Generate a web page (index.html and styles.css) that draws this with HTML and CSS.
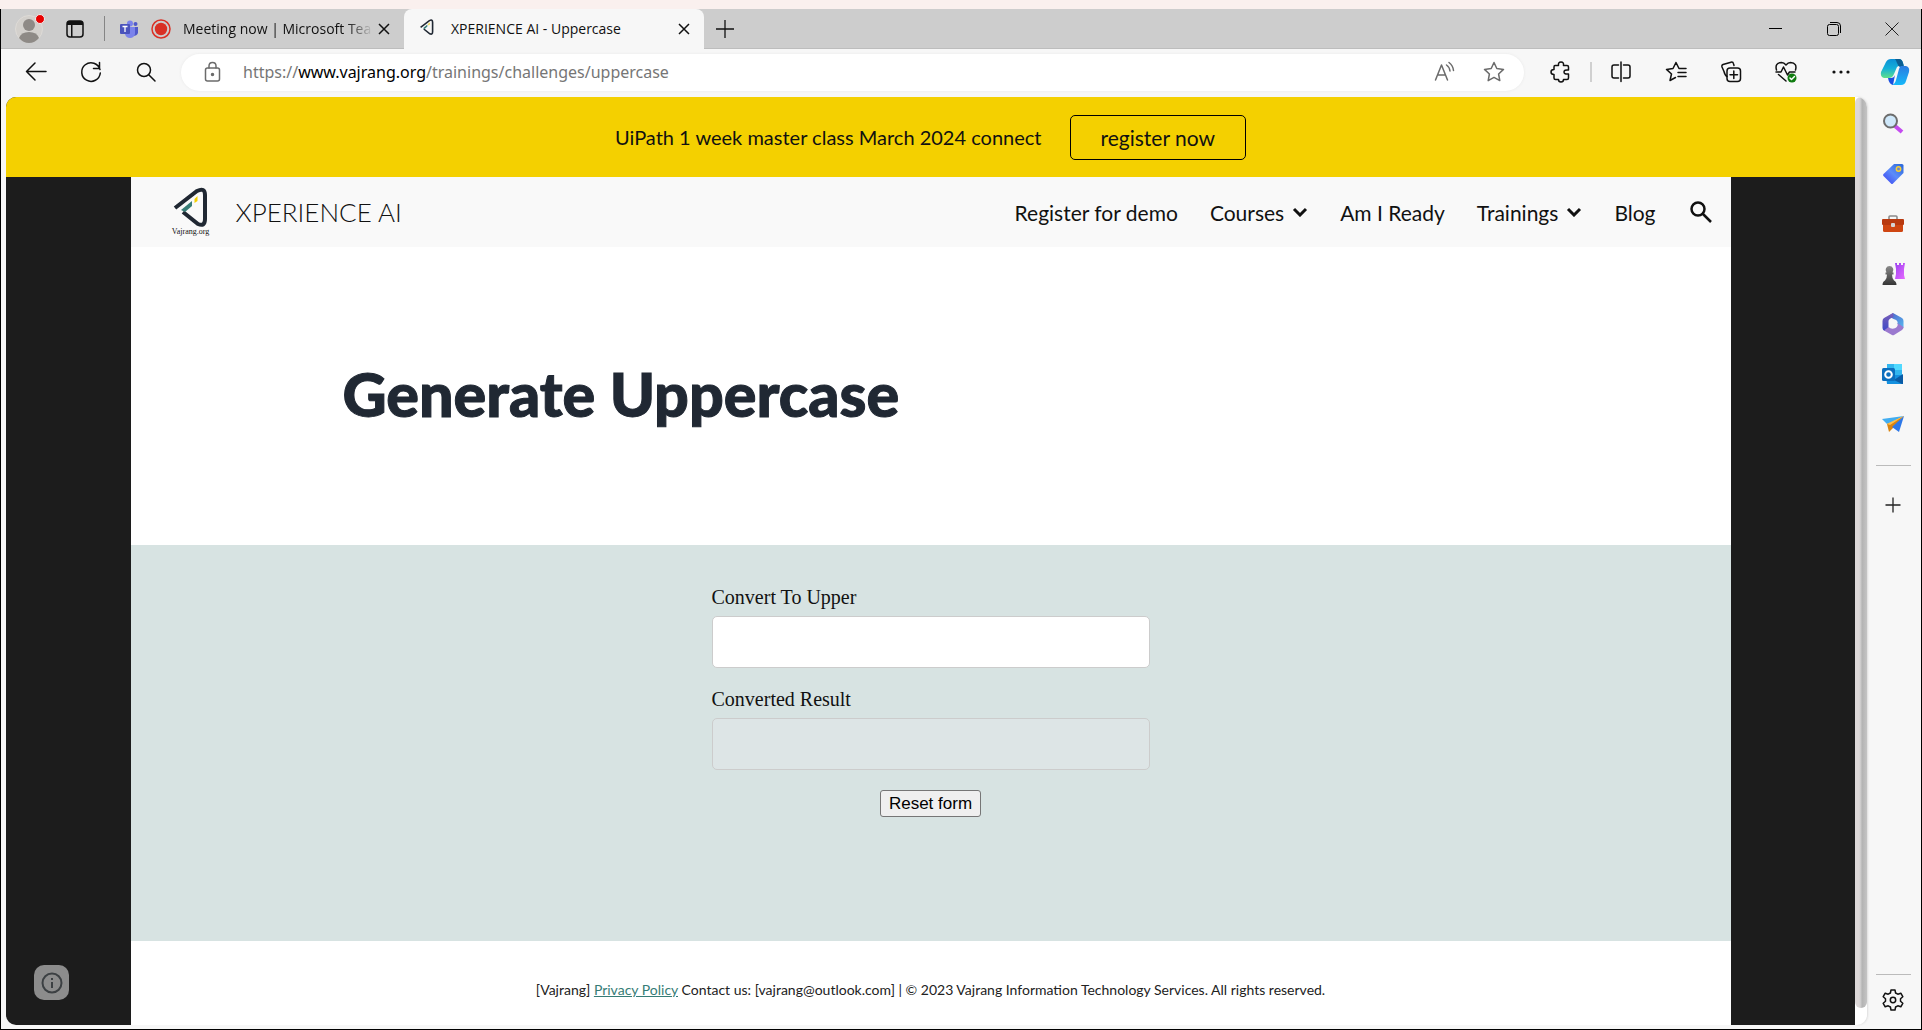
FILE: index.html
```html
<!DOCTYPE html>
<html lang="en">
<head>
<meta charset="utf-8">
<title>XPERIENCE AI - Uppercase</title>
<link rel="stylesheet" href="styles.css">
</head>
<body>
<svg width="0" height="0" class="defs" aria-hidden="true">
  <defs>
    <symbol id="brand" viewBox="0 0 36 50">
      <path d="M2 21 24 4q8-4 8 4v24q0 8-7 5L10 25" fill="none" stroke="#202833" stroke-width="4"/>
      <path d="m8 23 11-9v5l-7 6z" fill="#367c76"/>
      <path d="m21.500 12 3-3v5l-3 2z" fill="#f4d000"/>
    </symbol>
    <linearGradient id="cp1" x1="0" y1="0" x2="0" y2="1"><stop offset="0" stop-color="#0a8fd6"/><stop offset=".5" stop-color="#14b0d8"/><stop offset="1" stop-color="#5ee08a"/></linearGradient>
    <linearGradient id="cp2" x1="0" y1="0" x2="0" y2="1"><stop offset="0" stop-color="#2b7be0"/><stop offset="1" stop-color="#15b9fa"/></linearGradient>
    <linearGradient id="tag" x1="1" y1="0" x2="0" y2="1"><stop offset="0" stop-color="#2a68d8"/><stop offset=".5" stop-color="#5c8cfa"/><stop offset="1" stop-color="#3a3cf0"/></linearGradient>
    <linearGradient id="rook" x1="0" y1="0" x2="1" y2="1"><stop offset="0" stop-color="#9a3ff0"/><stop offset="1" stop-color="#e76bff"/></linearGradient>
    <linearGradient id="pawn" x1="0" y1="0" x2="0" y2="1"><stop offset="0" stop-color="#8a8a8a"/><stop offset="1" stop-color="#353535"/></linearGradient>
    <linearGradient id="m1" x1="0" y1="0" x2="1" y2="1"><stop offset="0" stop-color="#4f5fc8"/><stop offset="1" stop-color="#58b8f0"/></linearGradient>
    <linearGradient id="m2" x1="0" y1="0" x2="0" y2="1"><stop offset="0" stop-color="#7a5fb8"/><stop offset="1" stop-color="#3c49c8"/></linearGradient>
  </defs>
</svg>
<div class="window">
  <header class="tabs">
    <button class="profile" aria-label="Profile"><svg viewBox="0 0 30 30" width="30" height="30"><circle cx="14" cy="15" r="13.500" fill="#d3d0cc" stroke="#dedbd7"/><circle cx="14" cy="11" r="6" fill="#8e8a86"/><path d="M4 24q2-6 10-6t10 6q-4 5-10 5T4 24z" fill="#8e8a86"/><circle cx="25" cy="5" r="4.500" fill="#e80000" stroke="#eee"/></svg></button>
    <button class="workspace" aria-label="Tab actions"><svg viewBox="0 0 20 20" width="20" height="20"><rect x="2" y="2" width="16" height="16" rx="3" fill="none" stroke="#111" stroke-width="1.500"/><path d="M2 6V4q0-2 2-2h12q2 0 2 2v2zM6 6h1.500v12H6z" fill="#111"/></svg></button>
    <div class="tab">
      <svg viewBox="0 0 20 20" width="20" height="20"><circle cx="16.500" cy="5" r="2" fill="#5059c9"/><circle cx="11" cy="4.500" r="3" fill="#7b83eb"/><path d="M14 8h5v6q-1 3-5 3z" fill="#5059c9"/><path d="M6 8h10v7q-1 4-5 4t-5-4z" fill="#7b83eb"/><rect x="1" y="5" width="10" height="10" rx="1" fill="#4b53bc"/><path d="M3.500 7.500h5M6 7.500v5.500" stroke="#fff" stroke-width="1.300"/></svg>
      <svg viewBox="0 0 20 20" width="20" height="20"><circle cx="10" cy="10" r="9" fill="none" stroke="#d93025" stroke-width="1.500"/><circle cx="10" cy="10" r="6.200" fill="#d93025"/></svg>
      <span class="tab-title fade">Meeting now | Microsoft Tea</span>
      <button class="close" aria-label="Close tab"><svg viewBox="0 0 12 12" width="12" height="12"><path d="m1 1 10 10M11 1 1 11" stroke="#111" stroke-width="1.500"/></svg></button>
    </div>
    <div class="tab active">
      <span class="favicon"><svg width="16" height="20"><use href="#brand"/></svg></span>
      <span class="tab-title">XPERIENCE AI - Uppercase</span>
      <button class="close" aria-label="Close tab"><svg viewBox="0 0 12 12" width="12" height="12"><path d="m1 1 10 10M11 1 1 11" stroke="#111" stroke-width="1.500"/></svg></button>
    </div>
    <button class="newtab" aria-label="New tab"><svg viewBox="0 0 18 18" width="18" height="18"><path d="M9 0v18M0 9h18" stroke="#111" stroke-width="1.300"/></svg></button>
    <div class="controls">
      <button aria-label="Minimize"><svg viewBox="0 0 14 14" width="14" height="14"><path d="M0 6.500h13" stroke="#000"/></svg></button>
      <button aria-label="Restore"><svg viewBox="0 0 14 14" width="14" height="14" fill="none" stroke="#000"><rect x=".5" y="2.500" width="11" height="11" rx="2"/><path d="M3 .5h7q3.500 0 3.500 3.500v7"/></svg></button>
      <button aria-label="Close"><svg viewBox="0 0 14 14" width="14" height="14"><path d="m.5.5 13 13M13.500.5l-13 13" stroke="#222"/></svg></button>
    </div>
  </header>
  <nav class="toolbar" aria-label="Browser">
    <button aria-label="Back"><svg viewBox="0 0 24 24"><path d="M22 11.500H2.500M11 3l-8.500 8.500L11 20"/></svg></button>
    <button aria-label="Refresh"><svg viewBox="0 0 24 24"><path d="M21 9.500a9.300 9.300 0 1 0 .3 3.500M20.500 2.500v6h-6"/></svg></button>
    <button aria-label="Search"><svg viewBox="0 0 24 24"><circle cx="10" cy="10" r="6.500"/><path d="m15 15 6 6"/></svg></button>
    <div class="address">
      <svg class="lock" viewBox="0 0 24 24"><rect x="4.500" y="8" width="14" height="13" rx="2"/><path d="M8 8V6q0-3.500 3.500-3.500T15 6v2"/><circle cx="11.500" cy="14.500" r="1" fill="#666"/></svg>
      <div class="url" role="textbox" aria-label="Address">https://<b>www.vajrang.org</b>/trainings/challenges/uppercase</div>
      <button aria-label="Read aloud"><svg viewBox="0 0 24 24"><path d="M2.500 20 8.500 5l6 15M4.500 15h8M13.500 5q3 2 3.500 6M16 2.500q4 3 4.500 8"/></svg></button>
      <button aria-label="Add to favorites"><svg viewBox="0 0 24 24"><path d="m12 2.500 2.800 6 6.700.9-4.900 4.600 1.200 6.600-5.800-3.200-5.800 3.200L7.400 14 2.500 9.400l6.700-.9z"/></svg></button>
    </div>
    <button aria-label="Extensions"><svg viewBox="0 0 24 24"><path d="M6 5.500h3.500Q9 2 12 2t2.500 3.500H18q1.500 0 1.500 1.500v3q-4.500-.5-4.500 2t4.500 2v4q0 1.500-1.500 1.500h-3.500Q14.500 22 12 22t-2.500-2.500H6.500Q5 19.500 5 18v-3.500q-3 0-3-2.500t3-2.500V7q0-1.500 1-1.500z"/></svg></button>
    <span class="rule"></span>
    <button aria-label="Split screen"><svg viewBox="0 0 24 24"><path d="M9.500 5H5Q3 5 3 7v9q0 2 2 2h4.500M14.500 5H19q2 0 2 2v9q0 2-2 2h-4.500M12 2v19.500"/></svg></button>
    <button aria-label="Favorites"><svg viewBox="0 0 24 24"><path d="M22 8.500h-7l-3-6-3 6-6.500.9 5 4.600-1.500 6.500 5.500-3M14 12.500h8M14 16.500h8"/></svg></button>
    <button aria-label="Collections"><svg viewBox="0 0 24 24"><rect x="8" y="8" width="13.500" height="13.500" rx="3"/><path d="M14.800 11v7.500M11 14.800h7.500M8 16.500q-2-1-3-5L3 7q-.5-2 1-2.500l8-2.300q2-.5 2.500 1.500l.5 1.800"/></svg></button>
    <button aria-label="Browser essentials"><svg viewBox="0 0 24 24"><path d="M2.500 10q-2-7 5-7.500 2.500 0 4.500 2.500 2-2.500 4.500-2.500 7 .5 5 7.500M2 12h5l2.500-5 4 8 2-3H21M4.500 14.500l7.500 6.500"/><circle cx="18" cy="18" r="4.500" fill="#107c10" stroke="none"/><path d="m16 18 1.500 1.500 3-3" stroke="#fff"/></svg></button>
    <button aria-label="Settings and more"><svg viewBox="0 0 24 24"><g fill="#111" stroke="none"><circle cx="5" cy="12" r="1.600"/><circle cx="12" cy="12" r="1.600"/><circle cx="19" cy="12" r="1.600"/></g></svg></button>
    <button class="copilot" aria-label="Copilot"><svg viewBox="0 0 30 28" width="30" height="28"><path d="M6 4q1.500-3 5-3h8q3 0 4 4l1 3q-4-2-7 1l-3 7q-1.500 4-5 4H4q-4-1-3-6z" fill="url(#cp1)"/><path d="M15 1h4q3 0 4 4l1 4h-4q-2-1-3-4t-2-4z" fill="#0b5e92"/><path d="M21 8h5q4 1 3 6l-3 9q-1 4-5 4h-9q3-1 4-5l3-11q1-3 2-3z" fill="url(#cp2)"/><path d="M8 20h3q3 0 4-3l-2 10q-4-1-5-7z" fill="#1a4fe0"/></svg></button>
  </nav>
  <div class="stage">
    <main class="page">
      <div class="banner"><span>UiPath 1 week master class March 2024 connect</span><button>register now</button></div>
      <div class="content">
        <header class="site">
          <div class="logo"><svg width="36" height="50" viewBox="0 0 36 50"><use href="#brand"/></svg><small>Vajrang.org</small></div>
          <a class="name" href="#">XPERIENCE AI</a>
          <nav class="menu">
            <a href="#">Register for demo</a>
            <a href="#">Courses <svg viewBox="0 0 16 10"><path d="m2 2 6 6 6-6"/></svg></a>
            <a href="#">Am I Ready</a>
            <a href="#">Trainings <svg viewBox="0 0 16 10"><path d="m2 2 6 6 6-6"/></svg></a>
            <a href="#">Blog</a>
          </nav>
          <button class="find" aria-label="Search this site"><svg viewBox="0 0 24 24" width="24" height="24"><circle cx="9" cy="9" r="6.500"/><path d="m14 14 8 8"/></svg></button>
        </header>
        <section class="hero"><h1>Generate Uppercase</h1></section>
        <section class="convert">
          <form>
            <div class="field"><label for="src">Convert To Upper</label><input id="src" type="text"></div>
            <div class="field"><label for="out">Converted Result</label><input id="out" type="text" disabled></div>
            <button type="reset">Reset form</button>
          </form>
        </section>
        <footer><p>[Vajrang] <a href="#">Privacy Policy</a> Contact us: [vajrang@outlook.com] | © 2023 Vajrang Information Technology Services. All rights reserved.</p></footer>
      </div>
      <button class="info" aria-label="Site information"><svg viewBox="0 0 22 22" width="22" height="22"><circle cx="11" cy="11" r="9.500" fill="none" stroke="#3c4043" stroke-width="2"/><path d="M11 10v6M11 6v2" stroke="#3c4043" stroke-width="2"/></svg></button>
    </main>
    <div class="scroll"><span></span></div>
    <aside class="side">
      <button aria-label="Search"><svg viewBox="0 0 24 24"><path d="m14 14 7 6" stroke="#c44bf0" stroke-width="4"/><circle cx="9.500" cy="9" r="6.500" fill="#cfe8fa" stroke="#6d6d6d" stroke-width="2"/></svg></button>
      <button aria-label="Shopping"><svg viewBox="0 0 24 24"><path d="M13 2h8q1.500 0 1.500 1.500V11L12 21.500q-1 1-2 0L2.500 14q-1-1 0-2z" fill="url(#tag)"/><circle cx="17.500" cy="7" r="2.200" fill="#6b86c8" stroke="#f8ce35" stroke-width="1.500"/></svg></button>
      <button aria-label="Tools"><svg viewBox="0 0 24 24"><path d="M8 8V5q0-1 1-1h6q1 0 1 1v3" fill="none" stroke="#8b8b8b" stroke-width="1.600"/><rect x="2" y="11" width="20" height="9" rx="1.500" fill="#cf4612"/><rect x="1" y="7" width="22" height="6" rx="1" fill="#b83a10"/><rect x="10" y="11" width="4" height="4" rx="1" fill="#d5d5d5"/></svg></button>
      <button aria-label="Games"><svg viewBox="0 0 24 24"><path d="M14 1h2v2h2V1h2v2h2V1h2l-1 6v6l1 4H14l1-5V7z" fill="url(#rook)"/><path d="M8.500 4a4 4 0 0 1 3 6.500h1v2h-1.500q0 4 2 6 2.500 1 2.500 4.500H1.500Q1.500 19.500 4 18.500q2-2 2-6H4.500v-2h1a4 4 0 0 1 3-6.500z" fill="url(#pawn)"/></svg></button>
      <button aria-label="Microsoft 365"><svg viewBox="0 0 24 24"><path d="m12 1 9 5q1.500 1 1.500 3v7l-6-4q1-4-4-5l-5-3z" fill="url(#m1)"/><path d="M12 1 3 6Q1.500 7 1.500 9v7q0 2 2 3l4-3V9q0-2 5-4z" fill="url(#m2)"/><path d="M3 18.500 11 23q1 .5 2 0l8-5q1.500-1 1.500-3l-6-4q1 3-2 5-4 2-7-1z" fill="#9b79cf"/></svg></button>
      <button aria-label="Outlook"><svg viewBox="0 0 24 24"><path d="M6 2h14q1 0 1 1v11H6z" fill="#32b6ef"/><path d="M13 2h8v6h-8z" fill="#50d9ff"/><path d="M5 13h17v8q0 1-1 1H6z" fill="#1490df"/><path d="m22 12-9 6 8 4h1z" fill="#0a5ba5"/><rect x="1" y="6" width="13" height="13" rx="1.500" fill="#0c6ebd"/><circle cx="7.500" cy="12.500" r="3.300" fill="none" stroke="#fff" stroke-width="2"/></svg></button>
      <button aria-label="Drop"><svg viewBox="0 0 24 24"><path d="M23 4 1 7l5 5z" fill="#42adf0"/><path d="M23 4 6 12l2 8 4-4z" fill="#d98410"/><path d="M23 4 6 12l3 1z" fill="#ffc04a"/><path d="m23 4-12 11 7 5z" fill="#2d78e8"/></svg></button>
      <hr>
      <button aria-label="Customize"><svg viewBox="0 0 24 24"><path d="M12 4.500v15M4.500 12h15" stroke="#222" stroke-width="1.300"/></svg></button>
      <hr class="last">
      <button aria-label="Settings"><svg viewBox="0 0 24 24" fill="none" stroke="#111" stroke-width="1.500"><path d="M10 2h4l.6 3 2.200 1.200 3-1 2 3.500-2.300 2v2.600l2.300 2-2 3.500-3-1-2.200 1.200-.6 3h-4l-.6-3-2.200-1.200-3 1-2-3.500 2.300-2v-2.600l-2.300-2 2-3.500 3 1L9.400 5z" stroke-linejoin="round"/><circle cx="12" cy="12" r="2.700"/></svg></button>
    </aside>
  </div>
</div>
</body>
</html>
```

FILE: styles.css
```css
* { box-sizing: border-box; }
body { margin: 0; background: #faf0ee; font-family: "Open Sans", sans-serif; color: #111; }
button { font: inherit; color: inherit; border: 0; padding: 0; background: none; display: flex; align-items: center; justify-content: center; }
a { color: inherit; text-decoration: none; }
.defs { position: absolute; }
.window { margin-top: 9px; min-height: calc(100vh - 9px); display: flex; flex-direction: column; background: #f7f7f7; border: 1px solid #000; border-top: 0; }

.tabs { height: 40px; display: flex; align-items: center; background: #cdcdcd; border-bottom: 1px solid #bdbdbd; }
.profile { width: 30px; margin-left: 14px; }
.workspace { width: 20px; margin: 0 19px 0 20px; }
.tab { display: flex; align-items: center; height: 40px; width: 300px; padding: 0 13px 0 0; gap: 12px; font-size: 14px; }
.tab::before { content: ""; width: 1px; height: 25px; margin-right: 2px; background: #858585; }
.tab.active { background: #f7f7f7; border-radius: 8px 8px 0 0; }
.tab.active::before { background: none; }
.tab-title { flex: 1; min-width: 0; white-space: nowrap; }
.fade { margin-right: -8px; -webkit-mask-image: linear-gradient(to right, #000 86%, transparent); mask-image: linear-gradient(to right, #000 86%, transparent); }
.favicon { display: flex; width: 20px; }
.tab-title, .close { flex-shrink: 0; }
.close { width: 14px; }
.newtab { width: 42px; }
.controls { display: flex; margin-left: auto; }
.controls button { width: 58px; }

.toolbar { height: 48px; display: flex; align-items: center; padding: 0 0 2px 7px; }
.toolbar button { width: 55px; height: 36px; flex: none; }
.toolbar svg { width: 24px; height: 24px; fill: none; stroke: #111; stroke-width: 1.5; stroke-linecap: round; stroke-linejoin: round; }
.address { flex: 1; height: 37px; margin: 0 9px 0 8px; padding: 0 6px 0 20px; display: flex; align-items: center; background: #fff; border-radius: 19px; box-shadow: 0 0 3px #e8e8e8; }
.address .lock, .address button svg { stroke: #6b6b6b; }
.address button { width: 49px; }
.url { flex: 1; margin-left: 18px; font: 16px "Noto Sans", sans-serif; color: #767676; white-space: nowrap; }
.url b { font-weight: 400; color: #000; }
.rule { width: 2px; height: 20px; margin: 0 1px 0 2px; background: #d0d0d0; }
.toolbar .copilot { width: 53px; }
.toolbar .copilot svg { width: 30px; height: 28px; stroke: none; }

.stage { flex: 1; display: flex; padding: 0 0 4px 5px; }
.page { position: relative; flex: 1; display: flex; flex-direction: column; background: #1c1c1c; border-radius: 10px 0 0 10px; overflow: hidden; font-family: Lato, sans-serif; }
.banner { display: flex; justify-content: center; align-items: center; gap: 28px; height: 80px; background: #f4d000; font-size: 20px; }
.banner button { height: 45px; padding: 0 30px; border: 1px solid #000; border-radius: 5px; font-size: 21px; }
.content { flex: 1; width: 100%; max-width: 1600px; margin: 0 auto; display: flex; flex-direction: column; background: #fff; }
.site { display: flex; align-items: center; height: 70px; padding: 0 18px 0 42px; background: #f9f9f9; }
.logo { display: flex; flex-direction: column; align-items: center; width: 36px; height: 50px; margin-right: 27px; }
.logo svg { flex: none; margin-bottom: -10px; }
.logo small { font: 8px/10px "Liberation Serif", serif; }
.name { font-size: 26px; font-weight: 300; }
.menu { display: flex; align-items: center; gap: 32px; margin: 0 33px 0 auto; font-size: 21px; }
.menu a { display: flex; align-items: center; gap: 8px; white-space: nowrap; }
.menu svg { width: 16px; height: 10px; fill: none; stroke: #111; stroke-width: 3; }
.find svg { fill: none; stroke: #111; stroke-width: 2.5; }
.hero { padding: 110px 212px 114px; }
h1 { margin: 0; font-size: 61px; line-height: 74px; font-weight: 900; color: #202833; -webkit-text-stroke: 1px #202833; white-space: nowrap; }
.convert { padding: 39px 20px 124px; background: #d7e3e2; }
.convert form { max-width: 438px; margin: 0 auto; display: flex; flex-direction: column; gap: 18px; }
.field { display: flex; flex-direction: column; gap: 6px; }
.field label { font: 20px/26px "Liberation Serif", serif; }
.field input { width: 100%; height: 52px; padding: 0 12px; border: 1px solid #ccc; border-radius: 5px; background: #fff; font-size: 20px; }
.field input:disabled { background: #dde5e6; }
.convert button { align-self: center; height: 27px; margin-top: 2px; padding: 0 8px; border: 1px solid #767676; border-radius: 3px; background: #efefef; font: 17px "Liberation Sans", sans-serif; color: #000; }
footer { flex: 1; display: flex; align-items: center; justify-content: center; min-height: 83px; padding-top: 12px; font-size: 14px; color: #222; }
footer p { margin: 0; }
footer a { color: #367c76; text-decoration: underline; }
.info { position: absolute; left: 28px; bottom: 25px; width: 35px; height: 35px; border-radius: 10px; background: #8c8c8c; }

.scroll { width: 12px; display: flex; background: #fff; border-radius: 0 10px 10px 0; box-shadow: 1px 0 2px #ddd; overflow: hidden; }
.scroll span { flex: 1; margin-bottom: 17px; border-radius: 6px; background: linear-gradient(to right, #dcd7d7 4px, #c9c9c9 6px, #b3b3b3 7px, #c4c4c4); }
.side { width: 54px; padding: 2px 2px 0 0; display: flex; flex-direction: column; align-items: center; }
.side button { width: 50px; height: 50px; flex: none; }
.side svg { width: 24px; height: 24px; }
.side hr { width: 35px; margin: 16px 0 14px; border: 0; border-top: 1px solid #bbb; }
.side .last { margin: auto 0 0; }
```
